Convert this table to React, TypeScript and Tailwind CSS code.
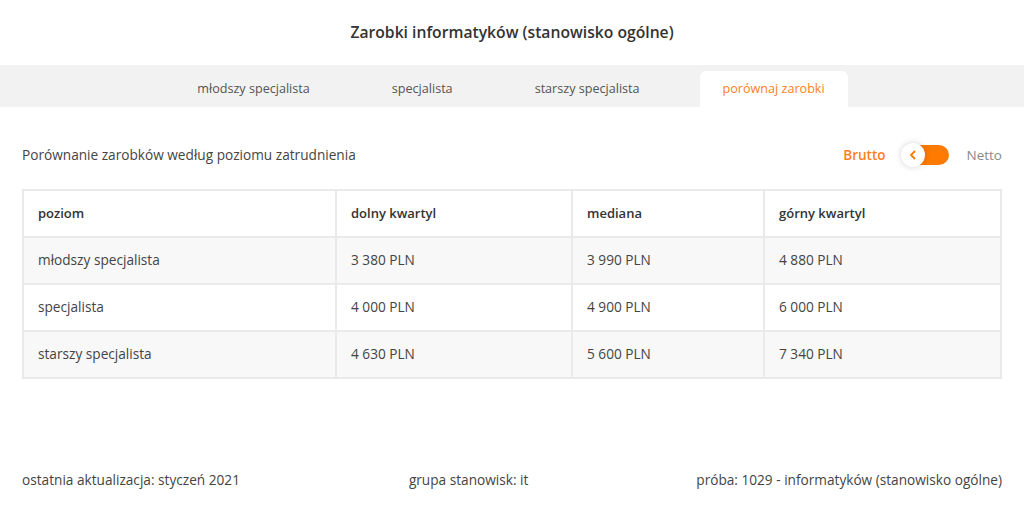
import React, { useState } from 'react';

// Salary comparison widget
const tabs = ['młodszy specjalista', 'specjalista', 'starszy specjalista', 'porównaj zarobki'];

const rows = [
  { level: 'młodszy specjalista', low: '3 380 PLN', median: '3 990 PLN', high: '4 880 PLN' },
  { level: 'specjalista', low: '4 000 PLN', median: '4 900 PLN', high: '6 000 PLN' },
  { level: 'starszy specjalista', low: '4 630 PLN', median: '5 600 PLN', high: '7 340 PLN' },
];

export default function App() {
  const [activeTab, setActiveTab] = useState(3);
  const [gross, setGross] = useState(true);

  return (
    <div className="w-[1024px] h-[515px] bg-white text-[#333] font-['Open_Sans',sans-serif] flex flex-col">
      {/* Title */}
      <h1 className="h-[65px] flex items-center justify-center text-[15.7px] font-semibold text-[#333]">
        Zarobki informatyków (stanowisko ogólne)
      </h1>

      {/* Tabs */}
      <div className="h-[42px] bg-[#f2f2f2] flex items-end justify-center pr-[20px]">
        {tabs.map((tab, i) => (
          <button
            key={tab}
            onClick={() => setActiveTab(i)}
            className={
              i === activeTab
                ? 'h-[36px] ml-[19px] px-[23px] rounded-t-[6px] bg-white text-[12.6px] text-[#ff7f1e]'
                : 'h-[36px] px-[41px] text-[12.6px] text-[#555]'
            }
          >
            {tab}
          </button>
        ))}
      </div>

      {/* Content */}
      <div className="px-[22px] pt-[36px]">
        <div className="flex items-center justify-between h-[24px]">
          <span className="text-[13.65px] text-[#444]">Porównanie zarobków według poziomu zatrudnienia</span>
          <div className="flex items-center">
            <span className={gross ? 'text-[13.5px] font-semibold text-[#ff7f1e]' : 'text-[13.5px] text-[#888]'}>Brutto</span>
            <button
              onClick={() => setGross(!gross)}
              className="relative ml-[16px] mr-[18px] w-[47px] h-[20px] rounded-full bg-[#ff7a00]"
            >
              <span className="absolute -left-[1px] -top-[2px] w-[24px] h-[24px] rounded-full bg-white shadow-[0_0_6px_rgba(0,0,0,0.18)] flex items-center justify-center">
                <svg width="8" height="10" viewBox="0 0 8 10" fill="none">
                  <path d="M5.5 1.5L2 5l3.5 3.5" stroke="#ff7a00" strokeWidth="1.8" strokeLinecap="round" strokeLinejoin="round" />
                </svg>
              </span>
            </button>
            <span className={gross ? 'text-[13.5px] text-[#8a8a8a]' : 'text-[13.5px] font-semibold text-[#ff7f1e]'}>Netto</span>
          </div>
        </div>

        <table className="mt-[22px] w-full border-collapse text-[13.65px]">
          <thead>
            <tr className="h-[47px] bg-white">
              <th className="w-[313px] border-2 border-[#eaeaea] px-[14px] text-left text-[13px] font-semibold text-[#333]">poziom</th>
              <th className="w-[236px] border-2 border-[#eaeaea] px-[14px] text-left text-[13px] font-semibold text-[#333]">dolny kwartyl</th>
              <th className="w-[192px] border-2 border-[#eaeaea] px-[14px] text-left text-[13px] font-semibold text-[#333]">mediana</th>
              <th className="border-2 border-[#eaeaea] px-[14px] text-left text-[13px] font-semibold text-[#333]">górny kwartyl</th>
            </tr>
          </thead>
          <tbody>
            {rows.map((r, i) => (
              <tr key={r.level} className={i % 2 === 0 ? 'h-[47px] bg-[#f8f8f8]' : 'h-[47px] bg-white'}>
                <td className="border-2 border-[#eaeaea] px-[14px] text-[#444]">{r.level}</td>
                <td className="border-2 border-[#eaeaea] px-[14px] text-[#444]">{r.low}</td>
                <td className="border-2 border-[#eaeaea] px-[14px] text-[#444]">{r.median}</td>
                <td className="border-2 border-[#eaeaea] px-[14px] text-[#444]">{r.high}</td>
              </tr>
            ))}
          </tbody>
        </table>
      </div>

      {/* Footer */}
      <div className="mt-auto mb-[25px] px-[22px] flex items-center justify-between text-[13.65px] text-[#444]">
        <span>ostatnia aktualizacja: styczeń 2021</span>
        <span className="pl-[1px]">grupa stanowisk: it</span>
        <span>próba: 1029 - informatyków (stanowisko ogólne)</span>
      </div>
    </div>
  );
}
